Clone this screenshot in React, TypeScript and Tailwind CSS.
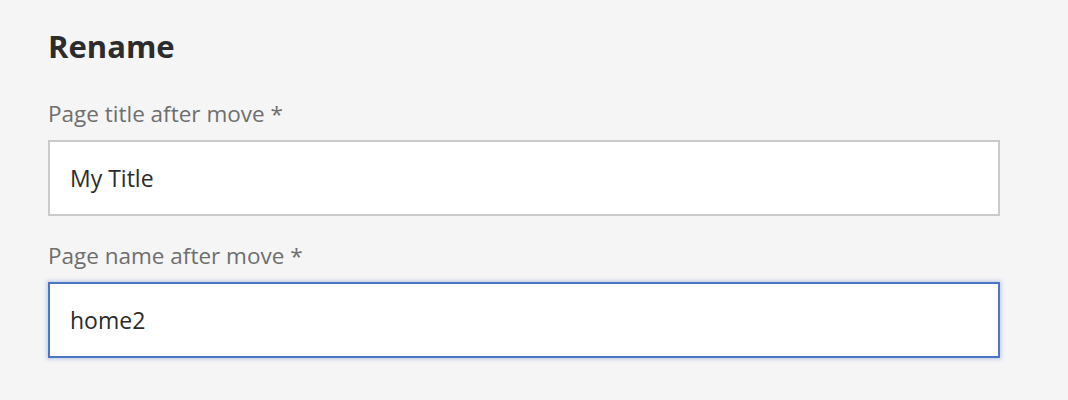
import React, { useState } from 'react';

const Field = ({ label, value, focused }: { label: string; value: string; focused?: boolean }) => {
  const [text, setText] = useState(value);
  return (
    <div className="flex flex-col">
      <label className="text-[22.5px] leading-[28px] text-[#6e6e6e] mb-[12px]">{label}</label>
      <input
        value={text}
        onChange={(e) => setText(e.target.value)}
        className={
          focused
            ? 'w-[952px] h-[76px] px-[20px] bg-white text-[23px] text-[#2c2c2c] border-2 border-[#4b75c6] shadow-[0_0_4px_1px_rgba(75,117,198,0.35)] outline-none'
            : 'w-[952px] h-[76px] px-[20px] bg-white text-[23px] text-[#2c2c2c] border-2 border-[#cacaca] outline-none'
        }
      />
    </div>
  );
};

const App = () => {
  return (
    <div
      className="w-[1068px] h-[400px] bg-[#f5f5f5] pl-[48px] pt-[24px]"
      style={{ fontFamily: '"Open Sans", "Noto Sans", sans-serif' }}
    >
      <h2 className="text-[31px] leading-[44px] font-bold text-[#2c2c2c] mb-[32px]">Rename</h2>
      <div className="flex flex-col gap-[26px]">
        <Field label="Page title after move *" value="My Title" />
        <Field label="Page name after move *" value="home2" focused />
      </div>
    </div>
  );
};

export default App;
